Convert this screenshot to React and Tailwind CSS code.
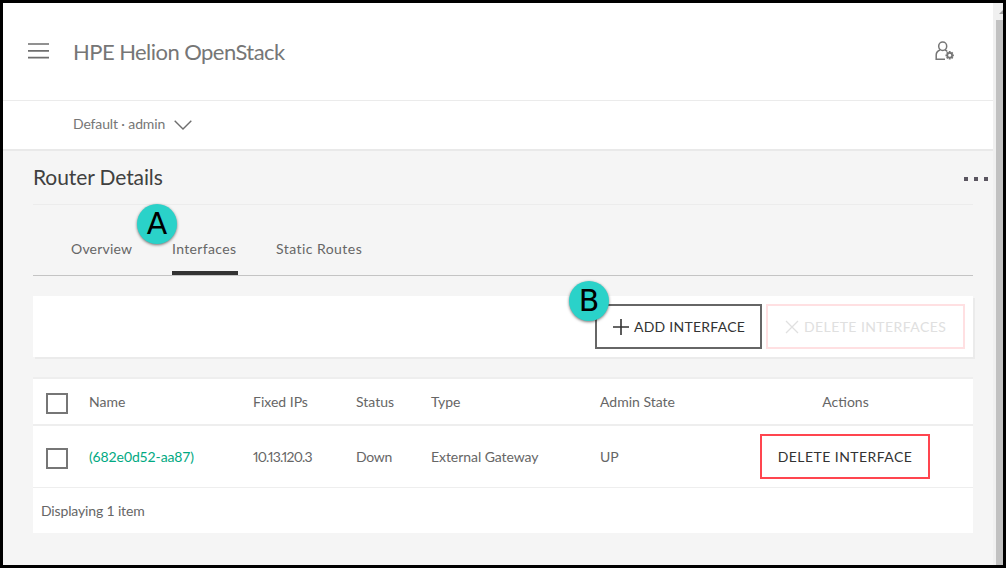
import React from "react";

const cols = "grid grid-cols-[56px_164px_103px_75px_169px_373px] items-center";

function Checkbox() {
  return <span className="ml-[13px] mt-[3px] block h-[21px] w-[22px] border-2 border-[#767676] bg-white" />;
}

function Badge({ children, className }) {
  return (
    <div className={"absolute flex h-[40px] w-[40px] items-center justify-center rounded-full bg-[#2ad2c9] pb-px font-['DejaVu_Sans'] text-[30px] leading-none text-black shadow-[0_1px_3px_rgba(0,0,0,0.55)] " + className}>
      {children}
    </div>
  );
}

function UserSettings() {
  return (
    <svg className="block h-[20px] w-[20px]" viewBox="0 0 20 20" fill="none" stroke="#767676">
      <ellipse cx="7.7" cy="5.2" rx="4" ry="4.2" strokeWidth="1.5" />
      <path d="M5 9C2.5 10 1.2 11.8 1.2 14v4.3H10M10 9c1 .3 1.7.8 2.2 1.5" strokeWidth="1.5" />
      <circle cx="14.7" cy="14.3" r="2.4" strokeWidth="1.7" />
      <path d="M14.7 10v1.7M14.7 16.8v1.7M10.5 14.3h1.7M17.2 14.3h1.7M11.7 11.3l1.3 1.3M16.4 16l1.3 1.3M17.7 11.3l-1.3 1.3M13 16l-1.3 1.3" strokeWidth="1.8" />
    </svg>
  );
}

export default function App() {
  return (
    <div className="relative flex h-[568px] w-[1006px] overflow-hidden border-[3px] border-black bg-[#f5f5f5] font-['Lato',sans-serif] text-[14px] leading-[20px] text-[#666]">
      <div className="flex min-w-0 flex-1 flex-col">
        <header className="flex h-[98px] shrink-0 items-center border-b border-[#ebebeb] bg-white pr-[38px]">
          <svg className="ml-[25px] block h-[16px] w-[21px] -translate-y-px" viewBox="0 0 21 16" stroke="#6e6e6e" strokeWidth="1.7">
            <path d="M0 1h21M0 7.8h21M0 14.6h21" />
          </svg>
          <h1 className="ml-[24px] whitespace-nowrap text-[22px] leading-[28px] tracking-[-0.55px] text-[#767676]">HPE Helion OpenStack</h1>
          <div className="mb-[2px] ml-auto"><UserSettings /></div>
        </header>
        <div className="-mr-px flex h-[50px] shrink-0 items-center border-b-2 border-[#e9e9e9] bg-white pl-[70px] text-[#767676]">
          <span className="mb-[2px] tracking-[-0.13px]">Default · admin</span>
          <svg className="ml-[9px] block h-[10px] w-[18px]" viewBox="0 0 18 10" fill="none" stroke="#6e6e6e" strokeWidth="1.4">
            <path d="M.7.7 9 9 17.3.7" />
          </svg>
        </div>
        <main className="flex flex-col pl-[30px] pr-[20px]">
          <div className="flex h-[54px] items-center justify-between border-b border-[#ececec]">
            <h2 className="mb-[2px] whitespace-nowrap text-[21px] leading-[28px] tracking-[-0.1px] text-[#404040]">Router Details</h2>
            <div className="-mr-[15px] mt-[3px] flex gap-[6px]">
              <i className="h-1 w-1 bg-[#5a5560]" />
              <i className="h-1 w-1 bg-[#5a5560]" />
              <i className="h-1 w-1 bg-[#5a5560]" />
            </div>
          </div>
          <nav className="flex h-[71px] items-end gap-[40px] border-b border-[#c4c4c4] pl-[38px]">
            <span className="flex h-[36px] w-[61px] whitespace-nowrap tracking-[0.2px]">Overview</span>
            <span className="flex h-[36px] w-[66px] whitespace-nowrap border-b-4 border-[#333] tracking-[0.35px]">Interfaces</span>
            <span className="-ml-[2px] flex h-[36px] whitespace-nowrap tracking-[0.45px]">Static Routes</span>
          </nav>
          <div className="mt-[20px] flex h-[61px] items-center justify-end gap-[4px] bg-white pr-[8px] shadow-[2px_2px_0_#ebebeb]">
            <button className="flex h-[45px] w-[167px] items-center whitespace-nowrap border-2 border-[#666] pl-[16px] text-[#333]">
              <svg className="mr-[5px] block h-[16px] w-[16px] shrink-0" viewBox="0 0 16 16" stroke="#333" strokeWidth="1.6"><path d="M8 0v16M0 8h16" /></svg>
              <span className="tracking-[0.25px]">ADD INTERFACE</span>
            </button>
            <button className="flex h-[45px] w-[199px] items-center whitespace-nowrap border-2 border-[#ffe0e2] pl-[17px] text-[#e0e0e0]">
              <svg className="mr-[5px] block h-[14px] w-[14px] shrink-0" viewBox="0 0 14 14" stroke="#e0e0e0" strokeWidth="1.3"><path d="m1 1 12 12M13 1 1 13" /></svg>
              <span className="tracking-[0.42px]">DELETE INTERFACES</span>
            </button>
          </div>
          <section className="mt-[20px] border-t-2 border-[#eee] bg-white">
            <div className={cols + " h-[47px] border-b-2 border-[#eee]"}>
              <Checkbox /><span>Name</span><span>Fixed IPs</span><span>Status</span><span>Type</span>
              <div className="grid grid-cols-[118px_255px]"><span>Admin State</span><span className="text-center">Actions</span></div>
            </div>
            <div className={cols + " h-[62px] border-b border-[#eee]"}>
              <Checkbox /><span className="tracking-[-0.12px] text-[#01a982]">(682e0d52-aa87)</span><span className="proportional-nums tracking-[-0.8px]">10.13.120.3</span><span className="tracking-[-0.3px]">Down</span><span className="tracking-[-0.06px]">External Gateway</span>
              <div className="flex items-center"><span className="w-[160px]">UP</span>
                <button className="flex h-[45px] w-[170px] items-center justify-center whitespace-nowrap border-2 border-[#ff454f] text-[#333]"><span className="tracking-[0.45px]">DELETE INTERFACE</span></button>
              </div>
            </div>
            <div className="flex h-[45px] items-center pl-[8px]"><span className="tracking-[-0.15px]">Displaying 1 item</span></div>
          </section>
        </main>
      </div>
      <div className="flex w-[10px] shrink-0 flex-col items-end">
        <div className="flex min-h-0 w-full flex-1 flex-col items-end bg-[linear-gradient(90deg,#f0f0f0,#f0f0f0)]">
          <svg className="block h-[17px] w-[7px] shrink-0" viewBox="0 0 7 17"><path d="M3 11 7 7v4z" fill="#a0a0a0" /></svg>
          <div className="w-[7px] flex-1 bg-[#c1c1c1]" />
        </div>
      </div>
      <Badge className="left-[134px] top-[201px]">A</Badge>
      <Badge className="left-[566px] top-[278px]">B</Badge>
    </div>
  );
}
